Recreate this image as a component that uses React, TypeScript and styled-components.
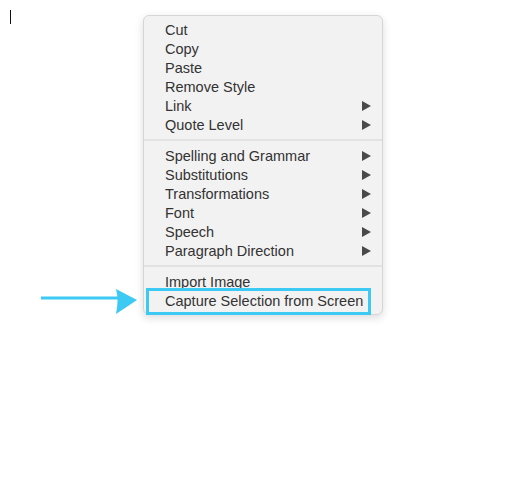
import { FunctionComponent } from 'react';
import styled, { createGlobalStyle } from 'styled-components';

const GlobalStyle = createGlobalStyle`
  html, body {
    margin: 0;
    padding: 0;
    background: #ffffff;
  }
`;

const Page = styled.div`
  position: relative;
  width: 532px;
  height: 494px;
  background: #ffffff;
  font-family: 'Liberation Sans', Arial, sans-serif;
  overflow: hidden;
`;

const Caret = styled.div`
  position: absolute;
  left: 10px;
  top: 10px;
  width: 1px;
  height: 14px;
  background: #111111;
`;

const Menu = styled.div`
  position: absolute;
  left: 143px;
  top: 15px;
  width: 238px;
  padding: 4px 0;
  background: #f2f2f2;
  border: 1px solid #d6d6d6;
  border-radius: 6px;
  box-shadow: 0 3px 9px rgba(0, 0, 0, 0.14);
`;

const Row = styled.div<{ $highlighted?: boolean }>`
  position: relative;
  display: flex;
  align-items: center;
  justify-content: space-between;
  height: 19px;
  padding: 0 11px 0 21px;
  font-size: 14.5px;
  color: #333333;
  white-space: nowrap;

  ${({ $highlighted }) =>
    $highlighted &&
    `
    &::after {
      content: '';
      position: absolute;
      left: 2px;
      right: 11px;
      top: -3px;
      bottom: -5px;
      border: 3px solid #3cc9f3;
    }
  `}
`;

const Separator = styled.div`
  height: 12px;
  display: flex;
  align-items: center;

  &::before {
    content: '';
    flex: 1;
    height: 2px;
    background: #e2e2e2;
  }
`;

const Arrow = styled.svg`
  position: absolute;
  left: 38px;
  top: 286px;
`;

const SubmenuMark: FunctionComponent = () => (
  <svg width="9" height="10" viewBox="0 0 9 10">
    <polygon points="0,0 9,5 0,10" fill="#4a4a4a" />
  </svg>
);

type Item = { label: string; submenu?: boolean; highlighted?: boolean };

const groups: Item[][] = [
  [
    { label: 'Cut' },
    { label: 'Copy' },
    { label: 'Paste' },
    { label: 'Remove Style' },
    { label: 'Link', submenu: true },
    { label: 'Quote Level', submenu: true },
  ],
  [
    { label: 'Spelling and Grammar', submenu: true },
    { label: 'Substitutions', submenu: true },
    { label: 'Transformations', submenu: true },
    { label: 'Font', submenu: true },
    { label: 'Speech', submenu: true },
    { label: 'Paragraph Direction', submenu: true },
  ],
  [{ label: 'Import Image' }, { label: 'Capture Selection from Screen', highlighted: true }],
];

export default function App() {
  return (
    <Page>
      <GlobalStyle />
      <Caret />
      <Menu>
        {groups.map((group, groupIndex) => (
          <div key={`group-${groupIndex}`}>
            {groupIndex > 0 && <Separator />}
            {group.map(({ label, submenu, highlighted }) => (
              <Row key={label} $highlighted={highlighted}>
                <span>{label}</span>
                {submenu && <SubmenuMark />}
              </Row>
            ))}
          </div>
        ))}
      </Menu>
      <Arrow width="102" height="30" viewBox="0 0 102 30">
        <rect x="3" y="10.5" width="82" height="3" fill="#3cc9f3" />
        <path d="M78 3 L99 14 L78 28 Q81 14 78 3 Z" fill="#3cc9f3" />
      </Arrow>
    </Page>
  );
}
